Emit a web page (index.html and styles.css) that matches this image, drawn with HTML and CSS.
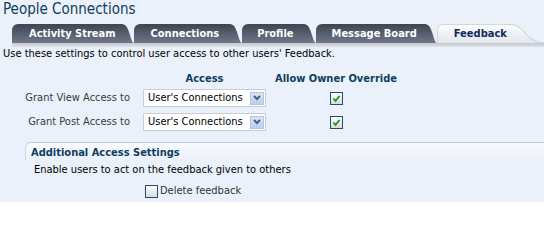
FILE: index.html
```html
<!DOCTYPE html>
<html>
<head>
<meta charset="utf-8">
<link rel="stylesheet" href="styles.css">
</head>
<body>
<div class="page">
  <h1 class="title">People Connections</h1>
  <svg class="defs" width="0" height="0">
    <defs>
      <linearGradient id="gDark" x1="0" y1="0" x2="0" y2="1">
        <stop offset="0" stop-color="#3d4553"/>
        <stop offset="1" stop-color="#707888"/>
      </linearGradient>
      <linearGradient id="gLight" x1="0" y1="0" x2="0" y2="1">
        <stop offset="0" stop-color="#ffffff"/>
        <stop offset="1" stop-color="#e2e5ea"/>
      </linearGradient>
    </defs>
  </svg>
  <div class="tabs">
    <div class="tab tab-activity"><span class="tab-body">Activity Stream</span><svg class="swoosh" width="13" height="19" viewBox="0 0 13 19"><path d="M0 0 C4 0 6 2 8 8 S11 19 13 19 L0 19 Z" fill="url(#gDark)"/></svg></div>
    <div class="tab tab-connections"><span class="tab-body">Connections</span><svg class="swoosh" width="13" height="19" viewBox="0 0 13 19"><path d="M0 0 C4 0 6 2 8 8 S11 19 13 19 L0 19 Z" fill="url(#gDark)"/></svg></div>
    <div class="tab tab-profile"><span class="tab-body">Profile</span><svg class="swoosh" width="13" height="19" viewBox="0 0 13 19"><path d="M0 0 C4 0 6 2 8 8 S11 19 13 19 L0 19 Z" fill="url(#gDark)"/></svg></div>
    <div class="tab tab-message"><span class="tab-body">Message Board</span><svg class="swoosh" width="13" height="19" viewBox="0 0 13 19"><path d="M0 0 C4 0 6 2 8 8 S11 19 13 19 L0 19 Z" fill="url(#gDark)"/></svg></div>
    <div class="tab tab-active"><span class="tab-body">Feedback</span><svg class="swoosh" width="34" height="19" viewBox="0 0 34 19"><path d="M0 0 C6 0 10 2 16 9 C22 16 28 19 34 19 L0 19 Z" fill="url(#gLight)"/><path d="M0 0.5 C6 0.5 10 2 16 9 C22 16 28 18.5 34 18.5" fill="none" stroke="#c9ccd3" stroke-width="1"/></svg></div>
  </div>
  <div class="tab-bar"></div>
  <p class="intro">Use these settings to control user access to other users' Feedback.</p>

  <div class="grid">
    <div></div>
    <div class="col-head">Access</div>
    <div class="col-head">Allow Owner Override</div>

    <div class="row-label">Grant View Access to</div>
    <div class="select"><span class="select-text">User's Connections</span><span class="select-btn"><svg width="8" height="6" viewBox="0 0 8 6"><path d="M1 1 L4 4 L7 1" fill="none" stroke="#4b5c7c" stroke-width="2"/></svg></span></div>
    <div class="check-cell"><span class="checkbox"><svg width="11" height="11" viewBox="0 0 11 11"><path d="M2.5 5.5 L4.5 8 L8.5 3" fill="none" stroke="#1f9a2b" stroke-width="2"/></svg></span></div>

    <div class="row-label">Grant Post Access to</div>
    <div class="select"><span class="select-text">User's Connections</span><span class="select-btn"><svg width="8" height="6" viewBox="0 0 8 6"><path d="M1 1 L4 4 L7 1" fill="none" stroke="#4b5c7c" stroke-width="2"/></svg></span></div>
    <div class="check-cell"><span class="checkbox"><svg width="11" height="11" viewBox="0 0 11 11"><path d="M2.5 5.5 L4.5 8 L8.5 3" fill="none" stroke="#1f9a2b" stroke-width="2"/></svg></span></div>
  </div>

  <section class="additional">
    <div class="add-head">Additional Access Settings</div>
    <p class="add-text">Enable users to act on the feedback given to others</p>
    <div class="add-option"><span class="checkbox"></span><span class="option-label">Delete feedback</span></div>
  </section>
</div>
</body>
</html>
```

FILE: styles.css
```css
* { box-sizing: border-box; }
body {
  margin: 0;
  background: #ffffff;
  font-family: "DejaVu Sans Condensed", "DejaVu Sans", sans-serif;
  font-size: 11px;
  color: #000;
}
.page {
  background: #ebf1fa;
  height: 202px;
  overflow: hidden;
}
.defs { position: absolute; }
.title {
  margin: 0;
  padding-left: 3px;
  font-size: 15px;
  font-weight: normal;
  line-height: 18px;
  color: #0f3d5e;
}
.tabs {
  display: flex;
  margin-top: 6px;
  padding-left: 12px;
  height: 19px;
}
.tab {
  display: flex;
  align-items: stretch;
}
.tab-body {
  display: flex;
  align-items: center;
  background: linear-gradient(#3d4553, #707888);
  color: #fff;
  font-weight: bold;
  font-size: 11px;
  border-top-left-radius: 6px;
  padding: 0 5px 0 17px;
}
.tab-connections .tab-body { padding-right: 10px; }
.tab-profile .tab-body { padding-left: 15px; padding-right: 9px; }
.tab-message .tab-body { padding-left: 16px; padding-right: 7px; }
.tab-active .tab-body {
  background: linear-gradient(#ffffff, #e2e5ea);
  color: #0e2a5a;
  padding-right: 2px;
  box-shadow: inset 0 1px 0 #d4d7dd, inset 1px 0 0 #d4d7dd;
}
.swoosh { display: block; }
.tab-bar {
  height: 4px;
  margin-left: 12px;
  background: linear-gradient(#c3c7cf, #dfe2e7);
}
.intro {
  margin: 0;
  padding-left: 3px;
  line-height: 13px;
}
.grid {
  display: grid;
  grid-template-columns: 130px 123px 120px;
  column-gap: 13px;
  row-gap: 6px;
  margin-top: 12px;
}
.grid > :nth-child(3) { margin-left: -6px; }
.col-head {
  font-weight: bold;
  color: #0f3d5e;
  text-align: center;
  line-height: 13px;
  margin-bottom: -2px;
}
.row-label {
  text-align: right;
  color: #3a3a3a;
  line-height: 18px;
}
.select {
  display: flex;
  align-items: center;
  justify-content: space-between;
  height: 18px;
  background: #fff;
  border: 1px solid #c9cdd5;
  padding: 0 1px 0 4px;
}
.select-text { line-height: 14px; }
.select-btn {
  display: flex;
  align-items: center;
  justify-content: center;
  width: 14px;
  height: 13px;
  background: linear-gradient(#d8e4f8, #b9cdee);
  border: 1px solid #b3c5e6;
}
.select-btn svg { display: block; }
.check-cell {
  display: flex;
  align-items: center;
  justify-content: center;
  margin-left: -6px;
}
.checkbox {
  display: inline-block;
  width: 13px;
  height: 13px;
  border: 1px solid #2b4b6c;
  background: linear-gradient(#fdfdfd, #d8dbde);
}
.checkbox svg { display: block; }
.additional {
  margin: 11px 0 0 25px;
}
.add-head {
  border-top: 1px solid #c5c7da;
  border-left: 1px solid #d2d5e4;
  border-top-left-radius: 6px;
  background: linear-gradient(#f8fafd, #ebf1fa);
  padding: 3px 0 0 5px;
  height: 18px;
  font-weight: bold;
  color: #0f3d5e;
  line-height: 13px;
}
.add-text {
  margin: 3px 0 0 9px;
  line-height: 13px;
}
.add-option {
  display: flex;
  align-items: center;
  margin: 8px 0 0 120px;
}
.option-label {
  margin-left: 2px;
  color: #333;
  line-height: 14px;
}
```
